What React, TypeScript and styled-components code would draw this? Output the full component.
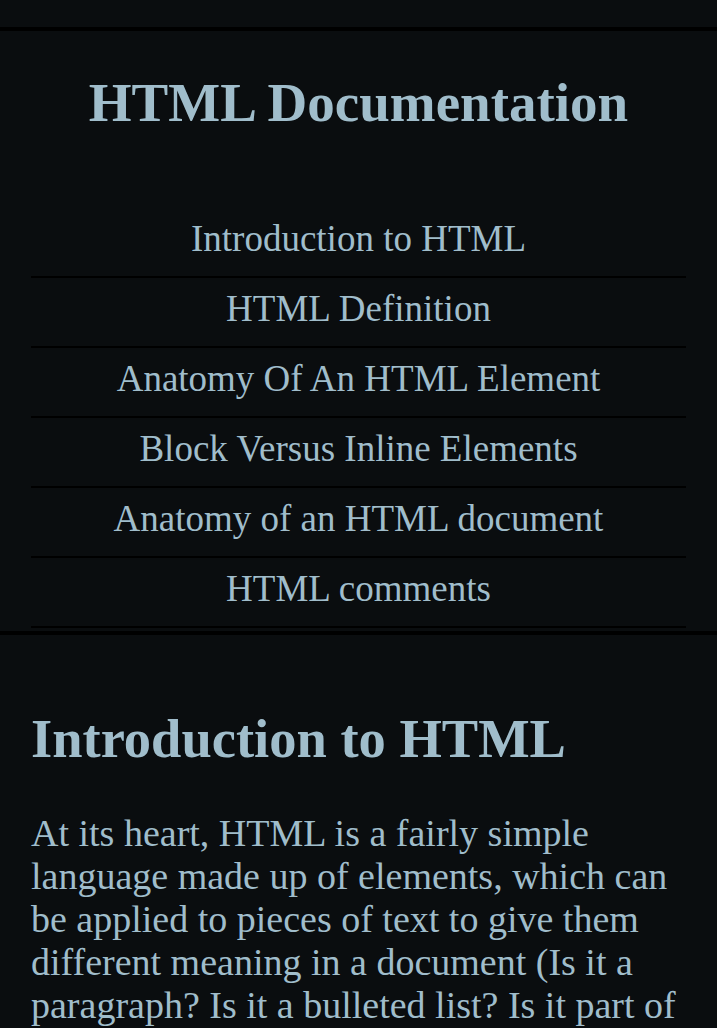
import React from 'react';
import styled, { createGlobalStyle } from 'styled-components';

const GlobalStyle = createGlobalStyle`
  html, body {
    margin: 0;
    padding: 0;
    background-color: #0a0d0f;
  }
  body {
    font-family: 'Liberation Serif', 'Times New Roman', serif;
    color: #a0bdcb;
  }
`;

const TopStrip = styled.div`
  height: 27px;
  background-color: #0a0d0f;
  border-bottom: 4px solid #000;
`;

const NavSection = styled.nav`
  padding: 0 31px 3px;
  background-color: #0a0d0f;
  border-bottom: 4px solid #000;
`;

const Title = styled.h1`
  margin: 0;
  padding-top: 41px;
  font-size: 55px;
  line-height: 62px;
  font-weight: 700;
  text-align: center;
`;

const NavList = styled.ul`
  list-style: none;
  margin: 74px 0 0;
  padding: 0;
`;

const NavItem = styled.li`
  padding: 9px 0 16px;
  font-size: 37px;
  line-height: 43px;
  text-align: center;
  border-bottom: 2px solid #000;
`;

const NavLink = styled.a`
  color: inherit;
  text-decoration: none;
`;

const Main = styled.main`
  padding: 73px 31px 40px;
`;

const SectionTitle = styled.h2`
  margin: 0;
  font-size: 54.5px;
  line-height: 62px;
  font-weight: 700;
`;

const Paragraph = styled.p`
  margin: 42px 0 0;
  font-size: 38px;
  line-height: 43px;
`;

const links = [
  'Introduction to HTML',
  'HTML Definition',
  'Anatomy Of An HTML Element',
  'Block Versus Inline Elements',
  'Anatomy of an HTML document',
  'HTML comments',
];

const App: React.FC = () => {
  return (
    <>
      <GlobalStyle />
      <TopStrip />
      <NavSection>
        <Title>HTML Documentation</Title>
        <NavList>
          {links.map((link) => (
            <NavItem key={link}>
              <NavLink href="#">{link}</NavLink>
            </NavItem>
          ))}
        </NavList>
      </NavSection>
      <Main>
        <SectionTitle>Introduction to HTML</SectionTitle>
        <Paragraph>
          At its heart, HTML is a fairly simple language made up of elements,
          which can be applied to pieces of text to give them different meaning
          in a document (Is it a paragraph? Is it a bulleted list? Is it part of
          a table?), structure a document into logical sections (Does it have a
          header? Three columns of content? A navigation menu?), and embed
          content such as images and videos into a page.
        </Paragraph>
      </Main>
    </>
  );
};

export default App;
